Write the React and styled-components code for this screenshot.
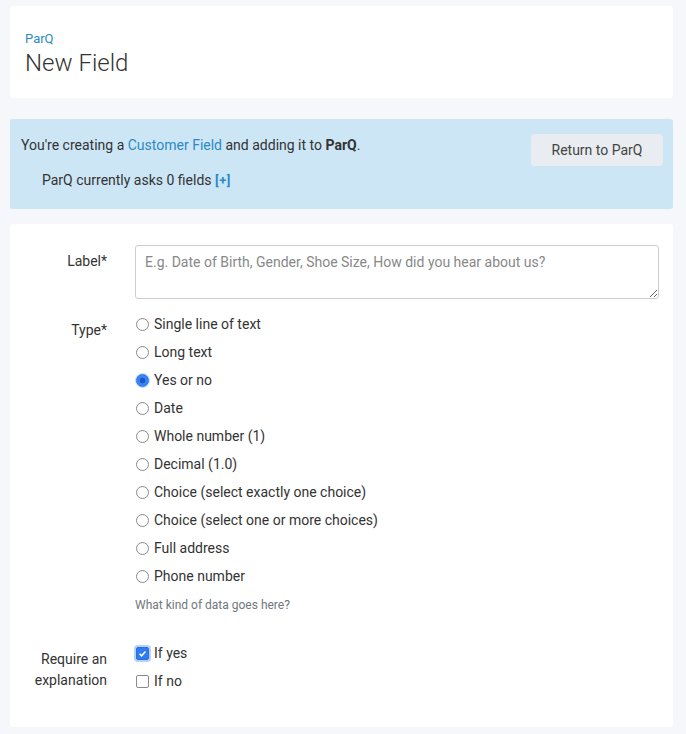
import React from 'react';
import styled, { createGlobalStyle } from 'styled-components';

const GlobalStyle = createGlobalStyle`
  body {
    margin: 0;
    background: #f5f7fa;
    font-family: Roboto, "Liberation Sans", sans-serif;
    color: #333;
  }
`;

const Page = styled.div`
  padding: 6px 13px 8px 10px;
  display: flex;
  flex-direction: column;
`;

const Panel = styled.section`
  background: #fff;
  border-radius: 3px;
`;

const HeaderPanel = styled(Panel)`
  height: 92px;
  box-sizing: border-box;
  padding: 25px 15px 0;
`;

const Crumb = styled.a`
  display: block;
  font-size: 13px;
  line-height: 15px;
  color: #2b8ac6;
  text-decoration: none;
`;

const Title = styled.h1`
  margin: 2px 0 0;
  font-size: 24px;
  line-height: 30px;
  font-weight: 300;
  color: #333;
`;

const Notice = styled.div`
  margin-top: 21px;
  height: 90px;
  box-sizing: border-box;
  background: #cde6f5;
  border-radius: 3px;
  padding: 15px 10px 0 11px;
  display: flex;
  justify-content: space-between;
  align-items: flex-start;
  font-size: 14px;
  color: #333;
`;

const NoticeText = styled.div`
  padding-top: 1px;
  line-height: 20px;
  p {
    margin: 0;
  }
  p + p {
    margin-top: 15px;
    padding-left: 21px;
  }
  a {
    color: #2b8ac6;
    text-decoration: none;
  }
  b {
    font-weight: 700;
  }
`;

const AddLink = styled.a`
  font-size: 13px;
  font-weight: 700;
  letter-spacing: 0.5px;
`;

const Button = styled.button`
  width: 132px;
  height: 32px;
  border: none;
  border-radius: 4px;
  background: #e9ecf0;
  color: #444;
  font-family: inherit;
  font-size: 14px;
`;

const FormPanel = styled(Panel)`
  margin-top: 15px;
  padding: 21px 14px 32px 0;
  display: grid;
  grid-template-columns: 97px 1fr;
  column-gap: 28px;
  row-gap: 20px;
`;

const FieldLabel = styled.label`
  text-align: right;
  font-size: 14px;
  line-height: 21px;
  color: #333;
  padding-top: ${({ top }) => top}px;
`;

const TextArea = styled.textarea`
  display: block;
  width: 100%;
  height: 54px;
  box-sizing: border-box;
  border: 1px solid #ccc;
  border-radius: 3px;
  padding: 6px 9px;
  font-family: inherit;
  font-size: 14px;
  line-height: 20px;
  resize: vertical;
  &::placeholder {
    color: #888;
  }
`;

const Options = styled.div`
  display: flex;
  flex-direction: column;
  margin-top: ${({ shift = 0 }) => shift}px;
`;

const Option = styled.label`
  display: flex;
  align-items: center;
  height: 28px;
  font-size: 14px;
  color: #333;
`;

const Radio = styled.input.attrs({ type: 'radio' })`
  appearance: none;
  margin: 0 5px 0 1px;
  width: 13px;
  height: 13px;
  box-sizing: border-box;
  border: 1px solid #8a8a8a;
  border-radius: 50%;
  background: #fff;
  &:checked {
    border-color: #2c6fe0;
    background: radial-gradient(circle, #1c57c9 0 2.6px, #3a85f5 3.2px);
    box-shadow: 0 0 0 1px #c9dcf9;
  }
`;

const Check = styled.input.attrs({ type: 'checkbox' })`
  appearance: none;
  margin: 0 5px 0 1px;
  width: 13px;
  height: 13px;
  box-sizing: border-box;
  border: 1px solid #8a8a8a;
  border-radius: 2px;
  background: #fff;
  &:checked {
    border-color: #2c6fe0;
    background: #2f7bf0 url("data:image/svg+xml,%3Csvg xmlns='http://www.w3.org/2000/svg' viewBox='0 0 13 13'%3E%3Cpath d='M3 6.8l2.4 2.4L10 4' fill='none' stroke='white' stroke-width='1.8'/%3E%3C/svg%3E") center/100% no-repeat;
    box-shadow: 0 0 0 2px #b8d2f7;
  }
`;

const Help = styled.div`
  margin: 7px 0 6px;
  font-size: 12px;
  line-height: 16px;
  color: #707780;
`;

const types = [
  'Single line of text',
  'Long text',
  'Yes or no',
  'Date',
  'Whole number (1)',
  'Decimal (1.0)',
  'Choice (select exactly one choice)',
  'Choice (select one or more choices)',
  'Full address',
  'Phone number',
];

export default function App() {
  return (
    <Page>
      <GlobalStyle />
      <HeaderPanel>
        <Crumb href="#">ParQ</Crumb>
        <Title>New Field</Title>
      </HeaderPanel>

      <Notice>
        <NoticeText>
          <p>
            You're creating a <a href="#">Customer Field</a> and adding it to <b>ParQ</b>.
          </p>
          <p>
            ParQ currently asks 0 fields <AddLink href="#">[+]</AddLink>
          </p>
        </NoticeText>
        <Button>Return to ParQ</Button>
      </Notice>

      <FormPanel>
        <FieldLabel top={6}>Label*</FieldLabel>
        <TextArea placeholder="E.g. Date of Birth, Gender, Shoe Size, How did you hear about us?" />

        <FieldLabel top={1}>Type*</FieldLabel>
        <Options shift={-9}>
          {types.map((t) => (
            <Option key={t}>
              <Radio name="type" defaultChecked={t === 'Yes or no'} />
              {t}
            </Option>
          ))}
          <Help>What kind of data goes here?</Help>
        </Options>

        <FieldLabel top={10}>Require an<br />explanation</FieldLabel>
        <Options>
          <Option>
            <Check defaultChecked />
            If yes
          </Option>
          <Option>
            <Check />
            If no
          </Option>
        </Options>
      </FormPanel>
    </Page>
  );
}
